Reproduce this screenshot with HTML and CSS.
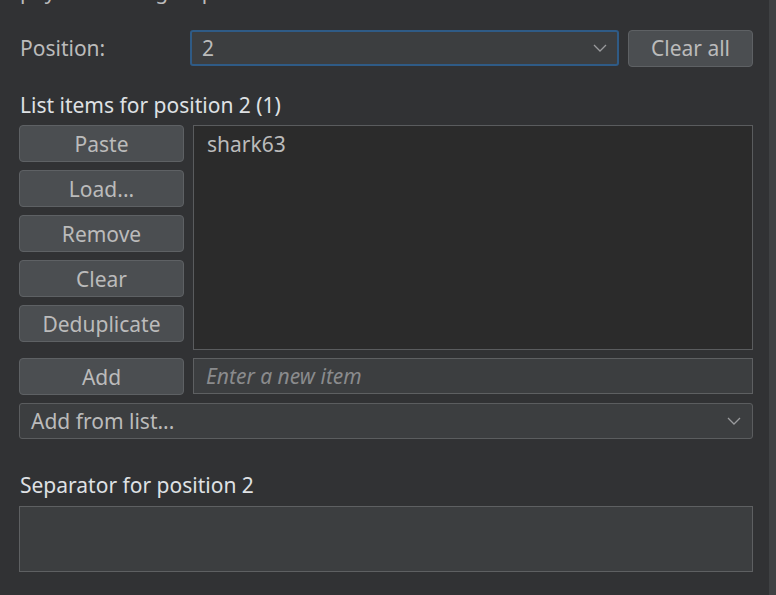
FILE: index.html
```html
<!DOCTYPE html>
<html>
<head>
<meta charset="utf-8">
<link rel="stylesheet" href="styles.css">
</head>
<body>
<div class="frame">
  <div class="content">
    <p class="intro">payloads using all permutations of items in the lists.</p>
    <div class="pos-row">
      <span class="label">Position:</span>
      <div class="combo focused"><span>2</span>
        <svg class="chev" width="14" height="8" viewBox="0 0 14 8"><path d="M1 1 L7 7 L13 1" fill="none" stroke="#9a9b9d" stroke-width="1.3"/></svg>
      </div>
      <button class="btn clear-all">Clear all</button>
    </div>
    <h2 class="heading">List items for position 2 (1)</h2>
    <div class="items">
      <div class="btn-col">
        <button class="btn">Paste</button>
        <button class="btn">Load...</button>
        <button class="btn">Remove</button>
        <button class="btn">Clear</button>
        <button class="btn">Deduplicate</button>
      </div>
      <div class="listbox"><div class="item">shark63</div></div>
    </div>
    <div class="add-row">
      <button class="btn add">Add</button>
      <div class="field"><span class="ph">Enter a new item</span></div>
    </div>
    <div class="combo from-list"><span>Add from list...</span>
      <svg class="chev" width="14" height="8" viewBox="0 0 14 8"><path d="M1 1 L7 7 L13 1" fill="none" stroke="#9a9b9d" stroke-width="1.3"/></svg>
    </div>
    <h2 class="heading sep-heading">Separator for position 2</h2>
    <div class="sep-field"></div>
  </div>
  <div class="scrollbar"></div>
</div>
</body>
</html>
```
FILE: styles.css
```css
html, body {
  margin: 0;
  padding: 0;
  background: #313234;
  overflow: hidden;
}
body {
  font-family: "Noto Sans", "Open Sans", sans-serif;
  font-size: 21px;
  color: #bbbbbb;
}
.frame {
  display: flex;
  width: 776px;
  height: 595px;
}
.content {
  flex: 1;
  min-width: 0;
  padding: 0 16px 0 19px;
  display: flex;
  flex-direction: column;
}
.scrollbar {
  width: 7px;
  flex: none;
  background: #3f4143;
}
.intro {
  margin: -22px 0 0 1px;
  height: 26px;
  line-height: 26px;
  white-space: nowrap;
  color: #bbbbbb;
}
.pos-row {
  display: flex;
  align-items: center;
  margin-top: 26px;
  height: 36px;
}
.label {
  width: 170px;
  padding-left: 1px;
}
.combo {
  box-sizing: border-box;
  display: flex;
  align-items: center;
  justify-content: space-between;
  background: #3c3e40;
  border: 1px solid #5b5d5f;
  border-radius: 3px;
  height: 36px;
  padding: 0 11px 0 11px;
}
.combo.focused {
  width: 429px;
  border: 2px solid #2f5b86;
  padding-left: 10px;
  padding-right: 10px;
}
.btn {
  box-sizing: border-box;
  font-family: inherit;
  font-size: 21px;
  color: #bbbbbb;
  background: #4b4e51;
  border: 1px solid #5e6164;
  border-radius: 4px;
  height: 37px;
  padding: 0;
  display: flex;
  align-items: center;
  justify-content: center;
}
.clear-all {
  margin-left: 9px;
  flex: 1;
  height: 37px;
}
.heading {
  margin: 26px 0 0 1px;
  font-size: 21px;
  font-weight: normal;
  color: #dfe1e4;
  height: 26px;
  line-height: 26px;
}
.items {
  display: flex;
  margin-top: 7px;
  gap: 9px;
}
.btn-col {
  display: flex;
  flex-direction: column;
  gap: 8px;
  width: 165px;
  flex: none;
}
.listbox {
  flex: 1;
  box-sizing: border-box;
  height: 225px;
  background: #2b2b2b;
  border: 1px solid #5a5c5e;
  padding: 4px 13px;
}
.item {
  line-height: 28px;
  color: #bbbbbb;
}
.add-row {
  display: flex;
  gap: 9px;
  margin-top: 8px;
}
.add {
  width: 165px;
  flex: none;
}
.field {
  flex: 1;
  box-sizing: border-box;
  height: 36px;
  background: #3c3e40;
  border: 1px solid #5e6062;
  display: flex;
  align-items: center;
  padding-left: 12px;
}
.ph {
  font-style: italic;
  color: #8a8b8d;
}
.from-list {
  margin-top: 8px;
}
.sep-heading {
  margin-top: 33px;
}
.sep-field {
  box-sizing: border-box;
  margin-top: 8px;
  height: 66px;
  background: #3c3e40;
  border: 1px solid #5e6062;
}
```
